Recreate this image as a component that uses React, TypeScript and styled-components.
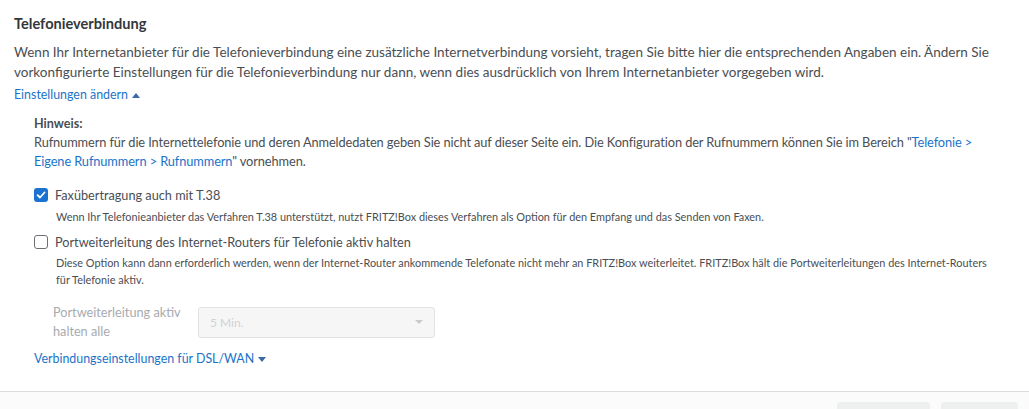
import React from 'react';
import styled, { createGlobalStyle } from 'styled-components';

const GlobalStyle = createGlobalStyle`
  html, body {
    margin: 0;
    padding: 0;
    background: #ffffff;
  }
  body {
    font-family: Lato, "Open Sans", Arial, sans-serif;
    color: #4a4e53;
  }
`;

const Page = styled.div`
  width: 1029px;
  height: 409px;
  overflow: hidden;
  display: flex;
  flex-direction: column;
`;

const Content = styled.div`
  padding: 14px 14px 0 14px;
  height: 391px;
  flex-shrink: 0;
  box-sizing: border-box;
`;

const Title = styled.h2`
  margin: 0 0 8px 0;
  font-size: 14.6px;
  line-height: 20px;
  font-weight: 700;
  color: #33373b;
`;

const Lines = styled.div<{ $size: number; $lh: number; $ls?: number }>`
  font-size: ${(p) => p.$size}px;
  line-height: ${(p) => p.$lh}px;
  letter-spacing: ${(p) => p.$ls ?? 0}px;
`;

const Line = styled.div`
  white-space: nowrap;
`;

const ToggleLink = styled.a<{ $mt: number }>`
  display: inline-flex;
  align-items: center;
  gap: 4px;
  margin-top: ${(p) => p.$mt}px;
  font-size: 12.4px;
  line-height: 20px;
  color: #1a73c9;
  text-decoration: none;
  cursor: pointer;
`;

const Caret = styled.span<{ $up?: boolean }>`
  width: 0;
  height: 0;
  border-left: 4px solid transparent;
  border-right: 4px solid transparent;
  ${(p) => (p.$up ? 'border-bottom: 5px solid #3b68a8;' : 'border-top: 5px solid #3b68a8;')}
`;

const Indented = styled.div`
  padding-left: 20px;
  margin-top: 9px;
  display: flex;
  flex-direction: column;
  align-items: flex-start;
`;

const Hint = styled.div`
  font-size: 12.6px;
  line-height: 19px;
  font-weight: 700;
  color: #4a4e53;
`;

const Link = styled.a`
  color: #1a73c9;
  text-decoration: none;
`;

const Option = styled.div<{ $mt: number }>`
  margin-top: ${(p) => p.$mt}px;
`;

const CheckRow = styled.label`
  display: flex;
  align-items: center;
  gap: 7px;
  font-size: 12.7px;
  line-height: 18px;
  color: #4a4e53;
`;

const Box = styled.span<{ $checked?: boolean }>`
  width: 14px;
  height: 14px;
  box-sizing: border-box;
  border-radius: 3px;
  border: ${(p) => (p.$checked ? 'none' : '1.5px solid #6b6f74')};
  background: ${(p) => (p.$checked ? '#1a73d0' : '#fff')};
  display: inline-flex;
  align-items: center;
  justify-content: center;
  flex-shrink: 0;
`;

const Explain = styled.div<{ $mt: number }>`
  margin: ${(p) => p.$mt}px 0 0 22px;
  font-size: 10.9px;
  line-height: 17px;
  color: #4a4e53;
`;

const SelectRow = styled.div`
  display: flex;
  align-items: center;
  margin-top: 15px;
  padding-left: 19px;
`;

const SelectLabel = styled.div`
  width: 145px;
  font-size: 12.7px;
  line-height: 19px;
  color: #a7abaf;
`;

const FakeSelect = styled.div`
  width: 237px;
  height: 31px;
  box-sizing: border-box;
  border: 1px solid #e0e2e4;
  border-radius: 3px;
  background: #f6f6f6;
  display: flex;
  align-items: center;
  justify-content: space-between;
  padding: 0 11px 0 11px;
  font-size: 12px;
  color: #d0d3d5;
`;

const GreyCaret = styled.span`
  width: 0;
  height: 0;
  border-left: 4px solid transparent;
  border-right: 4px solid transparent;
  border-top: 4px solid #c8cbce;
`;

const Footer = styled.div`
  flex: 1 0 auto;
  border-top: 1px solid #dcdcdc;
  background: #fbfbfb;
  display: flex;
  justify-content: flex-end;
  align-items: flex-start;
  gap: 11px;
  padding: 10px 11px 0 0;
`;

const FooterButton = styled.div<{ $w: number }>`
  width: ${(p) => p.$w}px;
  height: 30px;
  flex-shrink: 0;
  border-radius: 4px;
  background: #eeefef;
`;

const Check = () => (
  <svg width="10" height="10" viewBox="0 0 10 10">
    <path d="M1.6 5.2 L4 7.5 L8.5 2.5" fill="none" stroke="#fff" strokeWidth="1.8" strokeLinecap="round" strokeLinejoin="round" />
  </svg>
);

export default function App() {
  return (
    <Page>
      <GlobalStyle />
      <Content>
        <Title>Telefonieverbindung</Title>
        <Lines $size={13.5} $lh={20}>
          <Line>
            Wenn Ihr Internetanbieter für die Telefonieverbindung eine zusätzliche Internetverbindung vorsieht, tragen Sie bitte hier die entsprechenden Angaben ein. Ändern Sie
          </Line>
          <Line>vorkonfigurierte Einstellungen für die Telefonieverbindung nur dann, wenn dies ausdrücklich von Ihrem Internetanbieter vorgegeben wird.</Line>
        </Lines>
        <ToggleLink $mt={3}>
          Einstellungen ändern <Caret $up />
        </ToggleLink>
        <Indented>
          <Hint>Hinweis:</Hint>
          <Lines $size={12.8} $lh={19} $ls={-0.1}>
            <Line>
              Rufnummern für die Internettelefonie und deren Anmeldedaten geben Sie nicht auf dieser Seite ein. Die Konfiguration der Rufnummern können Sie im Bereich "<Link>Telefonie &gt;</Link>
            </Line>
            <Line>
              <Link>Eigene Rufnummern &gt; Rufnummern</Link>" vornehmen.
            </Line>
          </Lines>
          <Option $mt={15}>
            <CheckRow>
              <Box $checked>
                <Check />
              </Box>
              Faxübertragung auch mit T.38
            </CheckRow>
            <Explain $mt={4}>
              <Line>
                Wenn Ihr Telefonieanbieter das Verfahren T.38 unterstützt, nutzt FRITZ!Box dieses Verfahren als Option für den Empfang und das Senden von Faxen.
              </Line>
            </Explain>
          </Option>
          <Option $mt={8}>
            <CheckRow>
              <Box />
              Portweiterleitung des Internet-Routers für Telefonie aktiv halten
            </CheckRow>
            <Explain $mt={3}>
              <Line>
                Diese Option kann dann erforderlich werden, wenn der Internet-Router ankommende Telefonate nicht mehr an FRITZ!Box weiterleitet. FRITZ!Box hält die Portweiterleitungen des Internet-Routers
              </Line>
              <Line>für Telefonie aktiv.</Line>
            </Explain>
          </Option>
          <SelectRow>
            <SelectLabel>
              Portweiterleitung aktiv
              <br />
              halten alle
            </SelectLabel>
            <FakeSelect>
              5 Min.
              <GreyCaret />
            </FakeSelect>
          </SelectRow>
          <ToggleLink $mt={8}>
            Verbindungseinstellungen für DSL/WAN <Caret />
          </ToggleLink>
        </Indented>
      </Content>
      <Footer>
        <FooterButton $w={93} />
        <FooterButton $w={77} />
      </Footer>
    </Page>
  );
}
